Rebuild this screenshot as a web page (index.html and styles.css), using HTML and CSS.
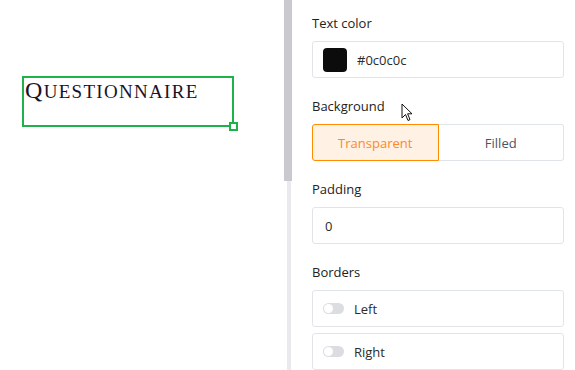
FILE: index.html
```html
<!DOCTYPE html>
<html lang="en">
<head>
    <meta charset="UTF-8">
    <title>Text block settings</title>
    <link rel="stylesheet" href="styles.css">
</head>
<body>
    <div class="editor">
        <!-- Canvas -->
        <div class="canvas">
            <div class="text-block">
                <span class="title"><span class="cap">Q</span>uestionnaire</span>
                <span class="handle"></span>
            </div>
        </div>

        <div class="scrollbar"><div class="thumb"></div></div>

        <!-- Settings panel -->
        <div class="panel">
            <div class="field">
                <label>Text color</label>
                <div class="input color-input">
                    <span class="swatch"></span>
                    <span>#0c0c0c</span>
                </div>
            </div>

            <div class="field">
                <label>Background</label>
                <div class="segmented">
                    <button class="seg active">Transparent</button>
                    <button class="seg">Filled</button>
                </div>
                <svg class="cursor" width="12" height="20" viewBox="0 0 12 20">
                    <path d="M1 1 L1 15 L4.5 11.5 L7 17.5 L9 16.6 L6.6 10.8 L11 10.8 Z" fill="#fff" stroke="#111" stroke-width="1" stroke-linejoin="round"/>
                </svg>
            </div>

            <div class="field">
                <label>Padding</label>
                <div class="input">0</div>
            </div>

            <div class="field">
                <label>Borders</label>
                <div class="toggle-row"><span class="toggle"></span>Left</div>
                <div class="toggle-row"><span class="toggle"></span>Right</div>
            </div>
        </div>
    </div>
</body>
</html>
```

FILE: styles.css
```css
* {
    box-sizing: border-box;
    margin: 0;
    padding: 0;
}

body {
    width: 575px;
    height: 370px;
    overflow: hidden;
    background: #ffffff;
    font-family: "Open Sans", "Noto Sans", sans-serif;
    color: #333333;
}

.editor {
    display: flex;
    height: 370px;
}

.canvas {
    width: 284px;
    padding: 76px 0 0 22px;
}

.text-block {
    position: relative;
    width: 212px;
    height: 51px;
    border: 2px solid #1fb24a;
    padding: 0 0 0 1px;
}

.title {
    display: block;
    font-family: "Liberation Serif", serif;
    text-transform: uppercase;
    font-size: 19px;
    line-height: 24px;
    letter-spacing: 1.3px;
    color: #1c1226;
}

.title .cap {
    font-size: 24px;
}

.handle {
    position: absolute;
    right: -6px;
    bottom: -6px;
    width: 9px;
    height: 9px;
    border: 2px solid #1fb24a;
    background: #ffffff;
}

.scrollbar {
    width: 8px;
    display: flex;
    justify-content: center;
    background: linear-gradient(to right, #ffffff 0 3px, #e9e9ee 3px 7px, #ffffff 7px);
}

.thumb {
    width: 8px;
    height: 181px;
    background: #c9c9cf;
}

.panel {
    flex: 1;
    padding: 13px 11px 0 20px;
}

.field {
    position: relative;
    margin-bottom: 18px;
}

label {
    display: block;
    font-size: 13px;
    line-height: 20px;
    margin-bottom: 8px;
    color: #222222;
}

.input {
    height: 37px;
    border: 1px solid #e1e5ea;
    border-radius: 3px;
    display: flex;
    align-items: center;
    padding: 0 12px;
    font-size: 13px;
    color: #2b2b2b;
}

.color-input {
    padding-left: 10px;
    gap: 10px;
}

.swatch {
    width: 24px;
    height: 24px;
    border-radius: 4px;
    background: #0c0c0c;
}

.segmented {
    display: flex;
    height: 37px;
}

.seg {
    flex: 1;
    font-family: inherit;
    font-size: 13px;
    background: #ffffff;
    color: #4d5363;
    border: 1px solid #e1e5ea;
    border-left: none;
    border-radius: 0 3px 3px 0;
}

.seg.active {
    background: #fff1e3;
    color: #fb8a2c;
    border: 1px solid #ff8c00;
    border-radius: 3px 0 0 3px;
}

.cursor {
    position: absolute;
    left: 89px;
    top: 7px;
}

.toggle-row {
    height: 37px;
    border: 1px solid #e1e5ea;
    border-radius: 3px;
    display: flex;
    align-items: center;
    gap: 10px;
    padding-left: 10px;
    font-size: 13px;
    color: #2b2b2b;
    margin-bottom: 6px;
}

.toggle {
    position: relative;
    width: 21px;
    height: 11px;
    border-radius: 6px;
    background: #dcdde0;
}

.toggle::after {
    content: '';
    position: absolute;
    left: 1px;
    top: 1px;
    width: 9px;
    height: 9px;
    border-radius: 50%;
    background: #ffffff;
}
```
